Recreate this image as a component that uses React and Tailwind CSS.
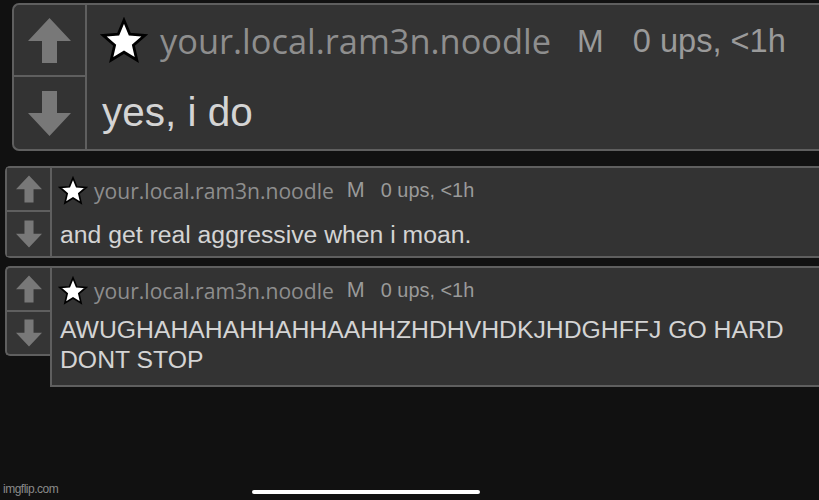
import React from 'react';

const Star = ({ size }) => (
  <svg width={size} height={size} viewBox="0 0 24 24">
    <polygon
      points="12,1.6 14.9,8.6 22.4,9.2 16.7,14.1 18.4,21.5 12,17.6 5.6,21.5 7.3,14.1 1.6,9.2 9.1,8.6"
      fill="#fff"
      stroke="#000"
      strokeWidth="1.4"
      strokeLinejoin="miter"
    />
  </svg>
);

const Arrow = ({ w, h, down }) => (
  <svg width={w} height={h} viewBox="0 0 43 45" style={down ? { transform: 'rotate(180deg)' } : undefined}>
    <polygon points="21.5,0 43,23 29,23 29,45 14,45 14,23 0,23" fill="#787878" />
  </svg>
);

const sans = "font-['Liberation_Sans',Arial,sans-serif]";
const nameFont = "font-['Open_Sans',sans-serif]";

const Meta = ({ big }) => (
  <div className={big ? 'flex items-center h-[72px] pl-[13px]' : 'flex items-center h-[45px] pl-[6px]'}>
    <Star size={big ? 48 : 30} />
    <span className={`${nameFont} text-[#8e8e8e] ${big ? 'text-[34.4px] ml-[12px]' : 'text-[21.1px] ml-[6px]'}`}>
      your.local.ram3n.noodle
    </span>
    <span className={`${sans} text-[#9a9a9a] ${big ? 'text-[32px] ml-[26px]' : 'text-[21.5px] ml-[13px]'}`}>M</span>
    <span className={`${sans} text-[#9a9a9a] ${big ? 'text-[32.6px] ml-[29px]' : 'text-[19.9px] ml-[16px]'}`}>0 ups, &lt;1h</span>
  </div>
);

const SmallVotes = ({ className }) => (
  <div className={`w-[45px] flex flex-col shrink-0 bg-[#353535] border-[#5f5f5f] ${className}`}>
    <div className="h-[44px] flex items-center justify-center border-b-2 border-[#5f5f5f]">
      <Arrow w={26} h={28} />
    </div>
    <div className="flex-1 flex items-center justify-center">
      <Arrow w={26} h={28} down />
    </div>
  </div>
);

export default function App() {
  return (
    <div className="w-[819px] h-[500px] bg-[#111111] relative overflow-hidden flex flex-col">
      {/* first comment */}
      <div className="ml-[12px] mt-[3px] h-[148px] flex border-2 border-r-0 border-[#5f5f5f] rounded-l-[7px] bg-[#333333]">
        <div className="w-[73px] flex flex-col border-r-2 border-[#5f5f5f] shrink-0">
          <div className="h-[72px] flex items-center justify-center border-b-2 border-[#5f5f5f]">
            <Arrow w={43} h={45} />
          </div>
          <div className="flex-1 flex items-center justify-center">
            <Arrow w={43} h={45} down />
          </div>
        </div>
        <div className="flex-1 flex flex-col">
          <Meta big />
          <div className={`${sans} text-[40.5px] text-[#d4d4d4] pl-[15px] leading-[70px]`}>yes, i do</div>
        </div>
      </div>

      {/* reply 1 */}
      <div className="ml-[5px] mt-[15px] h-[92px] flex border-2 border-r-0 border-[#5f5f5f] rounded-l-[5px] bg-[#333333]">
        <SmallVotes className="border-r-2" />
        <div className="flex-1 flex flex-col">
          <Meta />
          <div className={`${sans} text-[24.75px] text-[#d4d4d4] pl-[8px] leading-[43px]`}>
            and get real aggressive when i moan.
          </div>
        </div>
      </div>

      {/* reply 2 */}
      <div className="ml-[5px] mt-[8px] flex items-start">
        <SmallVotes className="h-[90px] border-2 border-r-0 rounded-l-[5px]" />
        <div className="flex-1 h-[121px] border-2 border-r-0 border-[#5f5f5f] bg-[#333333] flex flex-col">
          <Meta />
          <div className={`${sans} text-[24.75px] text-[#d4d4d4] pl-[8px] pr-[20px] leading-[30px] pt-[2px]`}>
            AWUGHAHAHAHHAHHAAHHZHDHVHDKJHDGHFFJ GO HARD DONT STOP
          </div>
        </div>
      </div>

      <div className={`${sans} absolute left-[3px] bottom-[2px] text-[12px] tracking-[-0.5px] text-[#8a8a8a]`}>imgflip.com</div>
      <div className="absolute left-[252px] bottom-[6px] w-[228px] h-[4px] rounded-full bg-white" />
    </div>
  );
}
